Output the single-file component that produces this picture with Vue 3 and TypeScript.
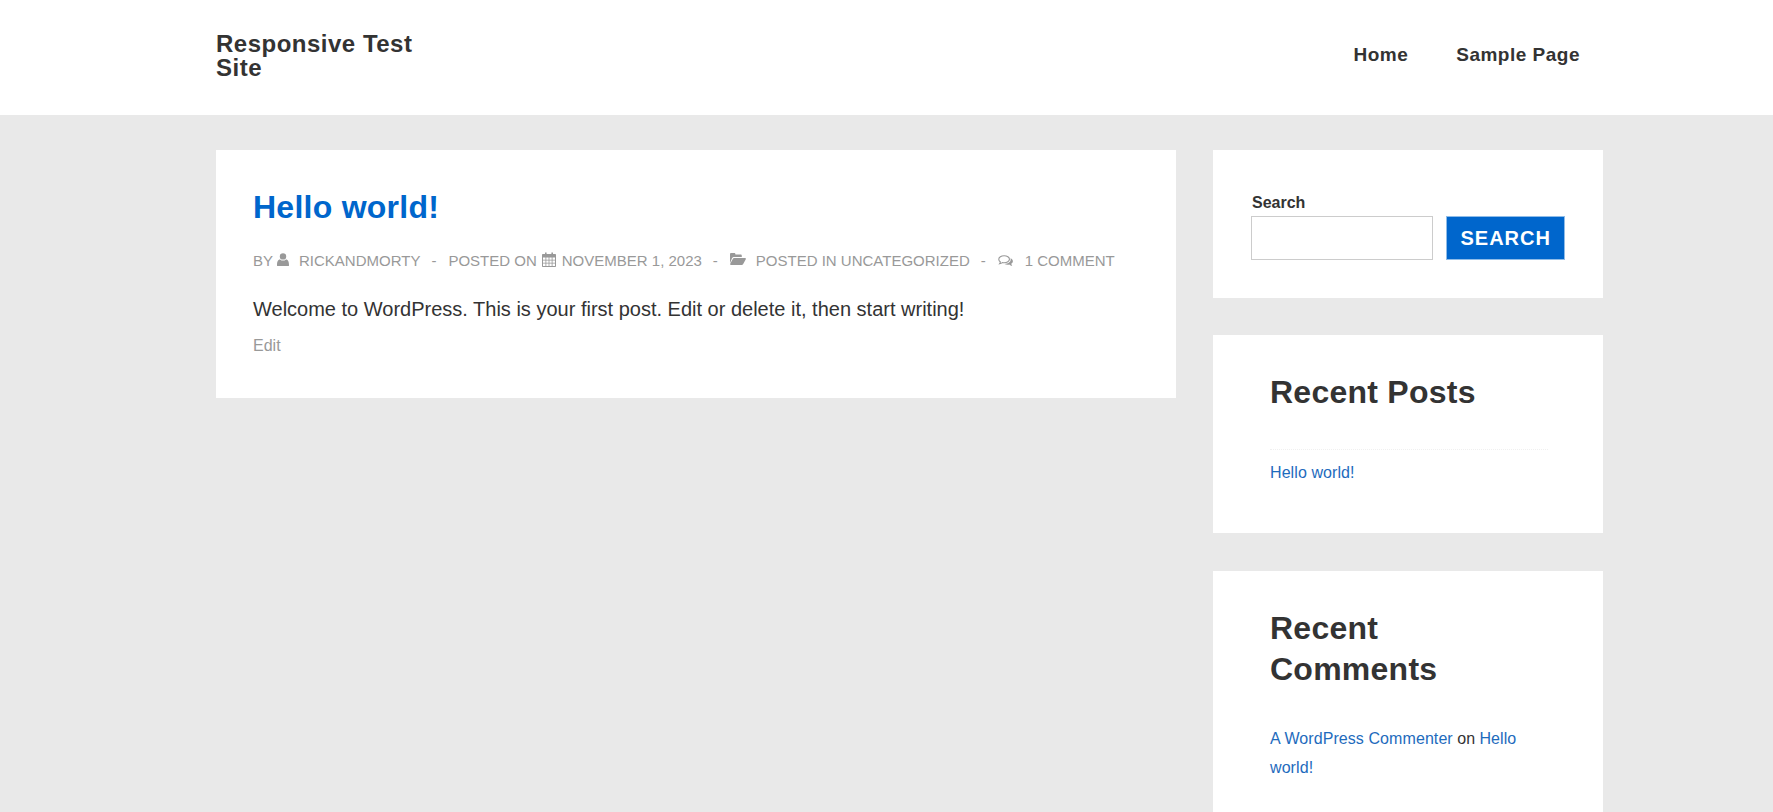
<script setup lang="ts">
const nav: string[] = ['Home', 'Sample Page']
</script>

<template>
  <div class="page">
    <header class="site-header">
      <div class="container header-row">
        <a class="brand">Responsive Test Site</a>
        <nav class="nav">
          <a v-for="item in nav" :key="item">{{ item }}</a>
        </nav>
      </div>
    </header>
    <div class="container content">
      <main class="post">
        <h1 class="post-title">Hello world!</h1>
        <div class="meta">
          <span class="m">BY</span>
          <svg class="ic user" viewBox="0 0 12 13"><circle cx="6" cy="3.400" r="3.200"/><path d="M0.300 13c-.3 0-.3-.4-.3-1 0-3 .8-5.600 3-5.600.9.800 1.900 1.200 3 1.200s2.100-.4 3-1.200c2.200 0 3 2.600 3 5.600 0 .6 0 1-.3 1z"/></svg>
          <span class="m author">RICKANDMORTY</span>
          <span class="dash">-</span>
          <span class="m">POSTED ON</span>
          <svg class="ic cal" viewBox="0 0 14 15"><path fill-rule="evenodd" d="M1 2h2V.6h1.600V2h4.800V.6H11V2h2c.6 0 1 .4 1 1v11c0 .6-.4 1-1 1H1c-.6 0-1-.4-1-1V3c0-.6.4-1 1-1zM1 5.500v2.200h2.500V5.500zm3.300 0v2.200h2.300V5.500zm3.100 0v2.200h2.300V5.500zm3.100 0v2.200H13V5.500zM1 8.500v2.200h2.500V8.500zm3.300 0v2.200h2.300V8.500zm3.100 0v2.200h2.300V8.500zm3.100 0v2.200H13V8.500zM1 11.500V14h2.500v-2.500zm3.300 0V14h2.300v-2.500zm3.100 0V14h2.300v-2.500zm3.100 0V14H13v-2.500z"/></svg>
          <span class="m date">NOVEMBER 1, 2023</span>
          <span class="dash">-</span>
          <svg class="ic folder" viewBox="0 0 16 12"><path d="M0 10.200V1.200C0 .5.500 0 1.200 0h3c.7 0 1.200.5 1.200 1.200v.3h5.200c.7 0 1.200.5 1.200 1.200V4H4.200c-.9 0-1.700.5-2.200 1.200z"/><path d="M4.200 5H15c.7 0 1.200.6.800 1.200l-2.600 4.900c-.3.600-.9.900-1.500.9H1c-.7 0-1.100-.6-.8-1.200L2.800 5.900C3.100 5.300 3.600 5 4.200 5z"/></svg>
          <span class="m">POSTED IN UNCATEGORIZED</span>
          <span class="dash">-</span>
          <svg class="ic cmt" viewBox="0 0 16 13"><path fill="none" stroke="currentColor" stroke-width="1.200" d="M6.500 .8c3.200 0 5.800 1.700 5.800 3.800S9.700 8.400 6.500 8.400c-.7 0-1.300-.1-1.900-.2-.9.700-1.900 1.100-3 1.300.5-.7.800-1.300.9-2C1.400 6.800.700 5.800.700 4.600.700 2.500 3.300.8 6.500.8z"/><path d="M13.400 3.500c1.600.7 2.600 1.900 2.600 3.300 0 1.100-.7 2.100-1.800 2.800.2.800.6 1.500 1.100 2.200-1.200-.2-2.300-.7-3.200-1.500-.6.100-1.100.2-1.700.2-1.300 0-2.500-.3-3.400-.8 3.600 0 6.600-1.900 6.600-4.500 0-.6-.1-1.100-.2-1.700z"/></svg>
          <span class="m">1 COMMENT</span>
        </div>
        <p class="body">Welcome to WordPress. This is your first post. Edit or delete it, then start writing!</p>
        <a class="edit">Edit</a>
      </main>
      <aside class="sidebar">
        <section class="widget search">
          <label class="search-label">Search</label>
          <div class="search-row">
            <input class="search-input" type="text" />
            <button class="search-btn" type="button">SEARCH</button>
          </div>
        </section>
        <section class="widget list recent">
          <h2 class="widget-title">Recent Posts</h2>
          <div class="rule"></div>
          <a class="link">Hello world!</a>
        </section>
        <section class="widget list comments">
          <h2 class="widget-title">Recent Comments</h2>
          <p class="comment-line"><a class="link">A WordPress Commenter</a> on <a class="link">Hello world!</a></p>
        </section>
      </aside>
    </div>
  </div>
</template>

<style>
html, body { margin: 0; padding: 0; }
</style>

<style scoped>
.page {
  height: 812px;
  overflow: hidden;
  background: #e9e9e9;
  font-family: "Liberation Sans", Arial, sans-serif;
  color: #333;
}
.container {
  width: 1387px;
  margin-left: 216px;
}
.site-header {
  background: #fff;
  height: 115px;
}
.header-row {
  display: flex;
  justify-content: space-between;
  align-items: flex-start;
}
.brand {
  width: 210px;
  margin-top: 32px;
  font-size: 24px;
  line-height: 24px;
  font-weight: 700;
  letter-spacing: 0.500px;
  color: #333;
}
.nav {
  display: flex;
  gap: 48px;
  margin-top: 44px;
  margin-right: 23px;
  font-size: 19px;
  line-height: 22px;
  font-weight: 700;
  letter-spacing: 0.500px;
  color: #333;
}
.content {
  display: flex;
  justify-content: space-between;
  align-items: flex-start;
  padding-top: 35px;
}
.post {
  width: 960px;
  height: 248px;
  box-sizing: border-box;
  background: #fff;
  padding: 37px 37px 0;
}
.post-title {
  margin: 0;
  font-size: 32px;
  line-height: 40px;
  font-weight: 700;
  letter-spacing: 0.250px;
  color: #0066cc;
}
.meta {
  display: flex;
  align-items: center;
  margin-top: 23px;
  height: 20px;
  font-size: 15px;
  color: #999;
}
.ic { fill: currentColor; display: block; flex: none; }
.user { width: 12px; height: 13px; margin: -1px 10px 0 4px; }
.cal { width: 14px; height: 15px; margin: -1px 6px 0 5px; }
.folder { width: 16px; height: 12px; margin: -2px 10px 0 0; }
.cmt { width: 15px; height: 12px; margin: 1px 12px 0 0; }
.dash { margin: 0 12px 0 11px; }
.body {
  margin: 25px 0 0;
  font-size: 20px;
  line-height: 28px;
  color: #333;
}
.edit {
  display: block;
  margin-top: 13px;
  font-size: 16px;
  line-height: 20px;
  color: #999;
}
.sidebar {
  width: 390px;
  display: flex;
  flex-direction: column;
  gap: 37px;
}
.widget {
  background: #fff;
  box-sizing: border-box;
}
.search {
  height: 148px;
  padding: 44px 38px 0 38px;
}
.search-label {
  display: block;
  font-size: 16px;
  line-height: 18px;
  font-weight: 700;
  color: #333;
  margin-left: 1px;
}
.search-row {
  display: flex;
  gap: 13px;
  margin-top: 4px;
}
.search-input {
  width: 183px;
  height: 44px;
  box-sizing: border-box;
  border: 1px solid #ccc;
  background: #fff;
  padding: 0;
}
.search-btn {
  width: 119px;
  height: 44px;
  box-sizing: border-box;
  border: 1px solid #8fbce8;
  background: #0066cc;
  color: #fff;
  font-family: inherit;
  font-size: 20px;
  font-weight: 700;
  letter-spacing: 1px;
  padding: 0;
}
.list {
  padding: 37px 55px 0 57px;
}
.recent { height: 198px; }
.comments { height: 300px; margin-top: 1px; }
.widget-title {
  margin: 0;
  font-size: 32px;
  line-height: 41px;
  font-weight: 700;
  letter-spacing: 0.250px;
  color: #333;
}
.rule {
  margin-top: 36px;
  border-top: 1px dotted #f0f0f0;
}
.link { color: #1e6bbd; font-size: 16px; line-height: 29px; letter-spacing: 0.080px; }
.recent .link { display: block; margin-top: 8px; }
.comment-line {
  margin: 34px 0 0;
  font-size: 16px;
  line-height: 29px;
  color: #333;
}
</style>
